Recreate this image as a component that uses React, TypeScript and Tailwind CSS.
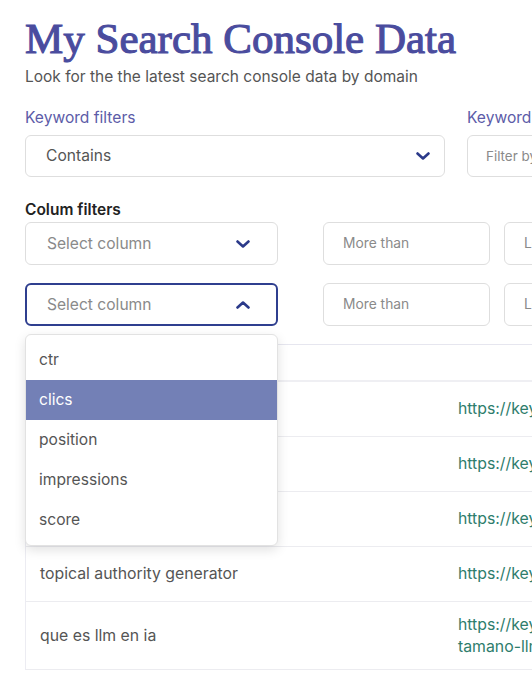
const options = ['ctr', 'clics', 'position', 'impressions', 'score'];

const rows = [
  { keyword: 'keyword research tool', url: 'https://keywordsearch.ai/herramientas' },
  { keyword: 'seo ai', url: 'https://keywordsearch.ai/seo-ai' },
  { keyword: 'llm seo', url: 'https://keywordsearch.ai/llm-seo' },
  { keyword: 'topical authority generator', url: 'https://keywordsearch.ai/topical-authority' },
];

function Chevron({ up }: { up?: boolean }) {
  return (
    <svg width="14" height="8" viewBox="0 0 14 8" className="text-[#2b3a8a] shrink-0">
      <path
        d={up ? 'M1.5 6.5 L7 1.5 L12.5 6.5' : 'M1.5 1.5 L7 6.5 L12.5 1.5'}
        fill="none"
        stroke="currentColor"
        strokeWidth="2.6"
        strokeLinecap="round"
        strokeLinejoin="round"
      />
    </svg>
  );
}

function SelectBox({ label, open }: { label: string; open?: boolean }) {
  return (
    <div
      className={`w-[253px] h-[43px] rounded-md bg-white flex items-center justify-between shrink-0 ${
        open ? 'border-2 border-[#2f3f8f] pl-[20px] pr-[26px]' : 'border border-[#dedede] pl-[21px] pr-[27px]'
      }`}
    >
      <span className="text-[15.6px] text-[#8a8a8a]">{label}</span>
      <Chevron up={open} />
    </div>
  );
}

function SmallInput({ placeholder }: { placeholder: string }) {
  return (
    <div className="w-[167px] h-[43px] rounded-md border border-[#dedede] bg-white flex items-center pl-[19px] shrink-0">
      <span className="text-[13.8px] text-[#8a8a8a]">{placeholder}</span>
    </div>
  );
}

export default function App() {
  return (
    <div className="w-[532px] h-[687px] overflow-hidden bg-white font-['Inter',sans-serif]">
      <div className="w-[900px] pl-[25px] pt-[15px]">
        <h1 className="font-['Liberation_Serif',serif] font-normal text-[43px] leading-[48px] text-[#4a4c9e] [-webkit-text-stroke:1.1px_#4a4c9e]">
          My Search Console Data
        </h1>
        <p className="mt-[3px] text-[15.5px] text-[#555] leading-[22px]">
          Look for the the latest search console data by domain
        </p>

        <div className="mt-[19px] flex gap-[22px]">
          <div className="w-[420px] shrink-0">
            <div className="text-[15.6px] text-[#5c5ca8] leading-[22px]">Keyword filters</div>
            <div className="mt-[6px] h-[42px] rounded-md border border-[#dedede] flex items-center justify-between pl-[20px] pr-[14px]">
              <span className="text-[15.6px] text-[#555]">Contains</span>
              <Chevron />
            </div>
          </div>
          <div className="w-[300px] shrink-0">
            <div className="text-[15.6px] text-[#5c5ca8] leading-[22px]">Keyword</div>
            <div className="mt-[6px] h-[42px] rounded-md border border-[#dedede] flex items-center pl-[18px]">
              <span className="text-[13.4px] text-[#8a8a8a]">Filter by keyword</span>
            </div>
          </div>
        </div>

        <div className="mt-[23px] text-[15.5px] font-semibold text-[#222] leading-[20px]">Colum filters</div>

        <div className="mt-[2px] flex items-center">
          <SelectBox label="Select column" />
          <div className="ml-[45px] flex gap-[14px]">
            <SmallInput placeholder="More than" />
            <SmallInput placeholder="Less than" />
          </div>
        </div>

        <div className="relative mt-[18px] flex items-center">
          <SelectBox label="Select column" open />
          <div className="ml-[45px] flex gap-[14px]">
            <SmallInput placeholder="More than" />
            <SmallInput placeholder="Less than" />
          </div>

          <div className="absolute left-0 top-[51px] z-10 w-[253px] rounded-md border border-[#e2e2e2] bg-white pt-[5px] pb-[5px] shadow-[0_4px_12px_rgba(0,0,0,0.12)]">
            {options.map((o) => (
              <div
                key={o}
                className={`h-[40px] flex items-center pl-[13px] text-[15.6px] ${
                  o === 'clics' ? 'bg-[#7380b6] text-white' : 'text-[#555]'
                }`}
              >
                {o}
              </div>
            ))}
          </div>
        </div>

        <div className="mt-[18px] border-l border-[#ececf2]">
          <div className="h-[38px] border-t border-[#e6e6ef] border-b-2 border-b-[#efeff3]" />
          {rows.map((r, i) => (
            <div key={i} className="flex items-center border-b border-[#ececf0] h-[55px] text-[15.8px]">
              <div className="w-[417px] shrink-0 pl-[14px] text-[#555]">{r.keyword}</div>
              <div className="pl-[15px] text-[#2e7d6c] whitespace-nowrap">{r.url}</div>
            </div>
          ))}
          <div className="flex items-center border-b border-[#ececf0] h-[68px] text-[15.8px]">
            <div className="w-[417px] shrink-0 pl-[14px] text-[#555]">que es llm en ia</div>
            <div className="pl-[15px] text-[#2e7d6c] leading-[22px] whitespace-nowrap">
              https://keywordsearch.ai/blog/que-es-llm-
              <br />
              tamano-llm-en-ia
            </div>
          </div>
        </div>
      </div>
    </div>
  );
}
